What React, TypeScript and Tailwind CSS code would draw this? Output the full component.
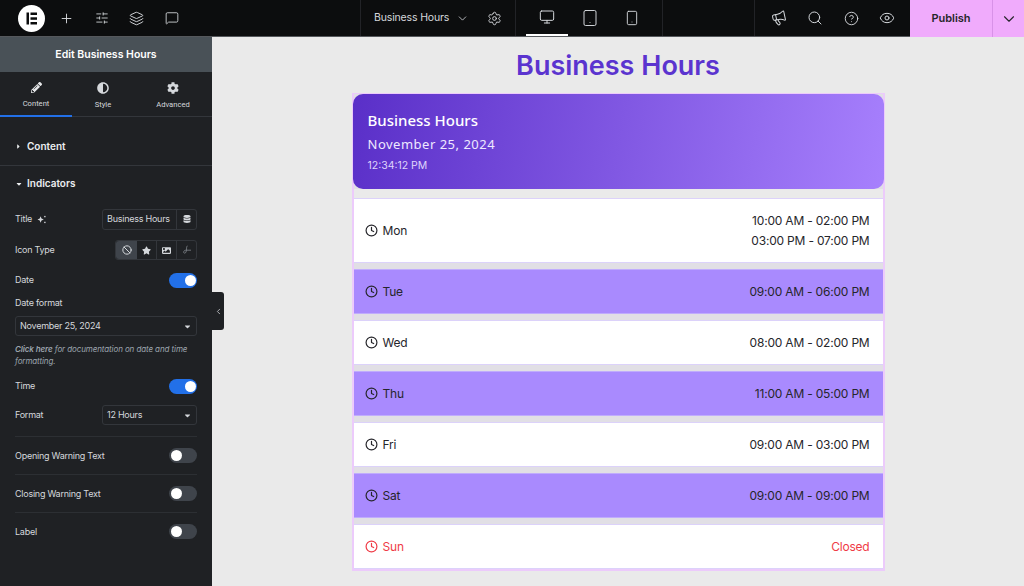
import { Ban, ChevronDown, ChevronLeft, Clock, Eye, CircleHelp, Layers, Megaphone, MessageSquare, Monitor, Plus, Search, Settings, SlidersHorizontal, Smartphone, Tablet } from "lucide-react"
import { FaAdjust, FaCaretDown, FaCaretRight, FaCog, FaDatabase, FaImage, FaPencilAlt, FaStar } from "react-icons/fa"

const hours = [
  { day: "Tue", time: "09:00 AM - 06:00 PM", tint: true },
  { day: "Wed", time: "08:00 AM - 02:00 PM" },
  { day: "Thu", time: "11:00 AM - 05:00 PM", tint: true },
  { day: "Fri", time: "09:00 AM - 03:00 PM" },
  { day: "Sat", time: "09:00 AM - 09:00 PM", tint: true },
]

function TopIcon({ children, w }: { children: React.ReactNode; w: string }) {
  return <div className={`flex items-center justify-center h-full text-[#d5d8dc] ${w}`}>{children}</div>
}

function Toggle({ on }: { on?: boolean }) {
  return (
    <div className={`w-[28px] h-[15px] rounded-full flex items-center px-[1.5px] ${on ? "bg-[#2270e8] justify-end" : "bg-[#3f444b] justify-start"}`}>
      <div className="w-[11px] h-[11px] rounded-full bg-white" />
    </div>
  )
}

function Day({ day, tint, closed, children }: { day: string; tint?: boolean; closed?: boolean; children: React.ReactNode }) {
  const color = closed ? "text-[#ef3b46]" : "text-[#26262b]"
  return (
    <div className={`h-[45px] flex items-center justify-between pl-[11px] pr-[13px] border-y text-[12px] tracking-[-0.2px] ${color} ${tint ? "bg-[#a98afe] border-[#c0acfd]" : "bg-white border-[#dcd2fa]"}`}>
      <div className="flex items-center gap-[5px]">
        <Clock size={13} strokeWidth={2.2} />
        <span>{day}</span>
      </div>
      <div>{children}</div>
    </div>
  )
}

export default function App() {
  return (
    <div className="w-[1024px] h-[586px] overflow-hidden flex flex-col bg-[#eaeaea] font-['Roboto',sans-serif]">
      <header className="h-[37px] shrink-0 flex bg-[#0c0d0e] border-b border-[#55585c]">
        <div className="w-[361px] flex items-center pl-[18px] border-r border-[#222327]">
          <svg width="27" height="27" viewBox="0 0 27 27" className="mr-[4px]">
            <circle cx="13.5" cy="13.5" r="13.5" fill="#fff" />
            <rect x="8.5" y="7.5" width="2.5" height="12" fill="#0c0d0e" />
            <rect x="12.5" y="7.5" width="6.5" height="2.5" fill="#0c0d0e" />
            <rect x="12.5" y="12.3" width="6.5" height="2.5" fill="#0c0d0e" />
            <rect x="12.5" y="17" width="6.5" height="2.5" fill="#0c0d0e" />
          </svg>
          <TopIcon w="w-[35px]"><Plus size={15} strokeWidth={1.5} /></TopIcon>
          <TopIcon w="w-[35px]"><SlidersHorizontal size={14} strokeWidth={1.5} /></TopIcon>
          <TopIcon w="w-[35px]"><Layers size={15} strokeWidth={1.5} /></TopIcon>
          <TopIcon w="w-[35px]"><MessageSquare size={14} strokeWidth={1.5} /></TopIcon>
        </div>
        <div className="w-[155px] flex items-center pl-[13px] border-r border-[#222327] text-[#d5d8dc] font-['Inter',sans-serif] text-[10.5px] tracking-[-0.15px]">
          <span className="w-[75px] whitespace-nowrap">Business Hours</span>
          <ChevronDown size={13} strokeWidth={1.5} className="ml-[7px]" />
          <Settings size={15} strokeWidth={1.5} className="ml-[18px]" />
        </div>
        <div className="w-[147px] flex pl-[10px] border-r border-[#222327]">
          <TopIcon w="w-[42px] border-b-2 border-white"><Monitor size={16} strokeWidth={1.5} /></TopIcon>
          <TopIcon w="w-[43px]"><Tablet size={18} strokeWidth={1.3} /></TopIcon>
          <TopIcon w="w-[42px]"><Smartphone size={16} strokeWidth={1.4} /></TopIcon>
        </div>
        <div className="w-[92px] border-r border-[#222327]" />
        <div className="w-[155px] flex pl-[6px]">
          <TopIcon w="w-[36px]"><Megaphone size={16} strokeWidth={1.5} className="-rotate-12" /></TopIcon>
          <TopIcon w="w-[36px]"><Search size={16} strokeWidth={1.5} /></TopIcon>
          <TopIcon w="w-[36px]"><CircleHelp size={15} strokeWidth={1.5} /></TopIcon>
          <TopIcon w="w-[36px]"><Eye size={16} strokeWidth={1.5} /></TopIcon>
        </div>
        <div className="w-[83px] -mb-px bg-[#f0abfc] flex items-center justify-center text-[#26262b] text-[11px] font-semibold font-['Inter',sans-serif] border-r border-[#d892e8]">
          Publish
        </div>
        <div className="flex-1 -mb-px bg-[#f0abfc] flex items-center justify-center text-[#26262b]">
          <ChevronDown size={18} strokeWidth={1.5} />
        </div>
      </header>

      <div className="flex-1 flex min-h-0">
        <aside className="relative w-[212px] shrink-0 bg-[#1f2124] text-[#d5d8dc] text-[9px] tracking-[-0.25px]">
          <div className="h-[35px] bg-[#495157] flex items-center justify-center text-white text-[10.5px] tracking-normal font-semibold font-['Inter',sans-serif]">Edit Business Hours</div>
          <div className="h-[45px] flex border-b border-[#33363b] text-[7.6px] tracking-normal">
            <div className="w-[72px] flex flex-col items-center pt-[10px] gap-[5px] border-b-2 border-[#2270e8] -mb-px">
              <FaPencilAlt size={11} className="text-[#e6e8ea]" />
              <span>Content</span>
            </div>
            <div className="w-[62px] flex flex-col items-center pt-[10px] gap-[5px]">
              <FaAdjust size={12} />
              <span>Style</span>
            </div>
            <div className="w-[78px] flex flex-col items-center pt-[10px] gap-[5px]">
              <FaCog size={12} />
              <span>Advanced</span>
            </div>
          </div>
          <div className="h-[49px] pt-[10px] flex items-center pl-[15px] gap-[5px] border-b border-[#33363b] text-[#eceef0] text-[10px] tracking-normal font-semibold font-['Inter',sans-serif]">
            <FaCaretRight size={7} />
            <span>Content</span>
          </div>
          <div className="h-[35px] flex items-center pl-[15px] gap-[4px] text-[#eceef0] text-[10px] tracking-normal font-semibold font-['Inter',sans-serif]">
            <FaCaretDown size={8} />
            <span>Indicators</span>
          </div>
          <div className="px-[15px] font-['Inter',sans-serif]">
            <div className="h-[32px] mt-[2px] mb-[-1px] flex items-center justify-between">
              <div className="flex items-center gap-[5px]">
                <span>Title</span>
                <svg width="9" height="9" viewBox="0 0 10 10" fill="#d5d8dc">
                  <path d="M4 1.5 5 4l2.5 1L5 6 4 8.5 3 6 .5 5 3 4z" />
                  <rect x="8" y="1" width="1.5" height="1.5" />
                  <rect x="8" y="7.5" width="1.5" height="1.5" />
                </svg>
              </div>
              <div className="w-[95px] h-[21px] flex rounded-[3px] border border-[#33363b]">
                <div className="flex-1 flex items-center pl-[4px] whitespace-nowrap">Business Hours</div>
                <div className="w-[20px] flex items-center justify-center border-l border-[#33363b]"><FaDatabase size={8} /></div>
              </div>
            </div>
            <div className="h-[32px] flex items-center justify-between">
              <span>Icon Type</span>
              <div className="w-[82px] h-[20px] flex rounded-[3px] border border-[#33363b]">
                <div className="w-[21px] flex items-center justify-center bg-[#3f444b] rounded-l-[3px]"><Ban size={10} strokeWidth={2.4} /></div>
                <div className="w-[20px] flex items-center justify-center border-r border-[#33363b]"><FaStar size={9} /></div>
                <div className="w-[20px] flex items-center justify-center border-r border-[#33363b]"><FaImage size={9} /></div>
                <div className="flex-1 flex items-center justify-center text-[#80858b]">
                  <svg width="10" height="10" viewBox="0 0 10 10" fill="none" stroke="currentColor" strokeWidth="0.8">
                    <path d="M5.5 1C4 1 5 4.5 4 7c-.5 1.5-2 1.5-2.3.5-.3-1 .6-2.3 2-2.3H9" />
                  </svg>
                </div>
              </div>
            </div>
            <div className="h-[28px] flex items-center justify-between">
              <span>Date</span>
              <Toggle on />
            </div>
            <div className="h-[18px] flex items-center">Date format</div>
            <div className="h-[20px] mt-[4px] flex items-center justify-between px-[4px] rounded-[3px] border border-[#33363b]">
              <span>November 25, 2024</span>
              <FaCaretDown size={9} />
            </div>
            <p className="mt-[7px] text-[8px] leading-[12px] tracking-[-0.1px] italic text-[#9da5ae]">
              <b className="font-semibold">Click here</b> for documentation on date and time
              <br />
              formatting.
            </p>
            <div className="h-[32px] mt-[3px] flex items-center justify-between">
              <span>Time</span>
              <Toggle on />
            </div>
            <div className="h-[26px] flex items-center justify-between">
              <span>Format</span>
              <div className="w-[95px] h-[20px] flex items-center justify-between px-[4px] rounded-[3px] border border-[#33363b]">
                <span>12 Hours</span>
                <FaCaretDown size={9} />
              </div>
            </div>
            <div className="h-[38px] mt-[8px] flex items-center justify-between border-t border-[#2c2f33]">
              <span>Opening Warning Text</span>
              <Toggle />
            </div>
            <div className="h-[38px] flex items-center justify-between border-t border-[#2c2f33]">
              <span>Closing Warning Text</span>
              <Toggle />
            </div>
            <div className="h-[38px] flex items-center justify-between border-t border-[#2c2f33]">
              <span>Label</span>
              <Toggle />
            </div>
          </div>
          <div className="absolute left-full top-[255px] w-[12px] h-[38px] bg-[#1f2124] rounded-r-[3px] flex items-center justify-center text-[#d5d8dc]">
            <ChevronLeft size={9} strokeWidth={2} />
          </div>
        </aside>

        <main className="flex-1 flex flex-col items-center font-['Inter',sans-serif]">
          <h1 className="h-[56px] pt-[2px] flex items-center text-[27px] font-semibold text-[#5b34cf]">Business Hours</h1>
          <div className="w-[533px] border-x-2 border-t border-b-2 border-[#eccbfb] bg-[#e1dfe5]">
            <div className="h-[95px] -mx-px rounded-[10px] bg-[linear-gradient(100deg,#5a2fc8,#a780fd)] pl-[15px] pt-[14px] text-white">
              <div className="text-[15px] font-medium leading-[24px] font-['Noto_Sans',sans-serif]">Business Hours</div>
              <div className="text-[13px] leading-[25px] tracking-[0.5px] text-[#eee8ff] font-['Noto_Sans',sans-serif]">November 25, 2024</div>
              <div className="text-[10.5px] leading-[17px] text-[#dfd5fb]">12:34:12 PM</div>
            </div>
            <div className="pt-[9px] bg-[#eaeaea]">
              <div className="h-[65px] flex items-center justify-between pl-[11px] pr-[13px] bg-white border-y border-[#dcd2fa] text-[12px] tracking-[-0.2px] text-[#26262b]">
                <div className="flex items-center gap-[5px]">
                  <Clock size={13} strokeWidth={2.2} />
                  <span>Mon</span>
                </div>
                <div className="text-right leading-[20px]">
                  <div>10:00 AM - 02:00 PM</div>
                  <div>03:00 PM - 07:00 PM</div>
                </div>
              </div>
            </div>
            <div className="flex flex-col gap-[6px] pt-[6px]">
              {hours.map((h) => (
                <Day key={h.day} day={h.day} tint={h.tint}>{h.time}</Day>
              ))}
              <Day day="Sun" closed>Closed</Day>
            </div>
          </div>
        </main>
      </div>
    </div>
  )
}
